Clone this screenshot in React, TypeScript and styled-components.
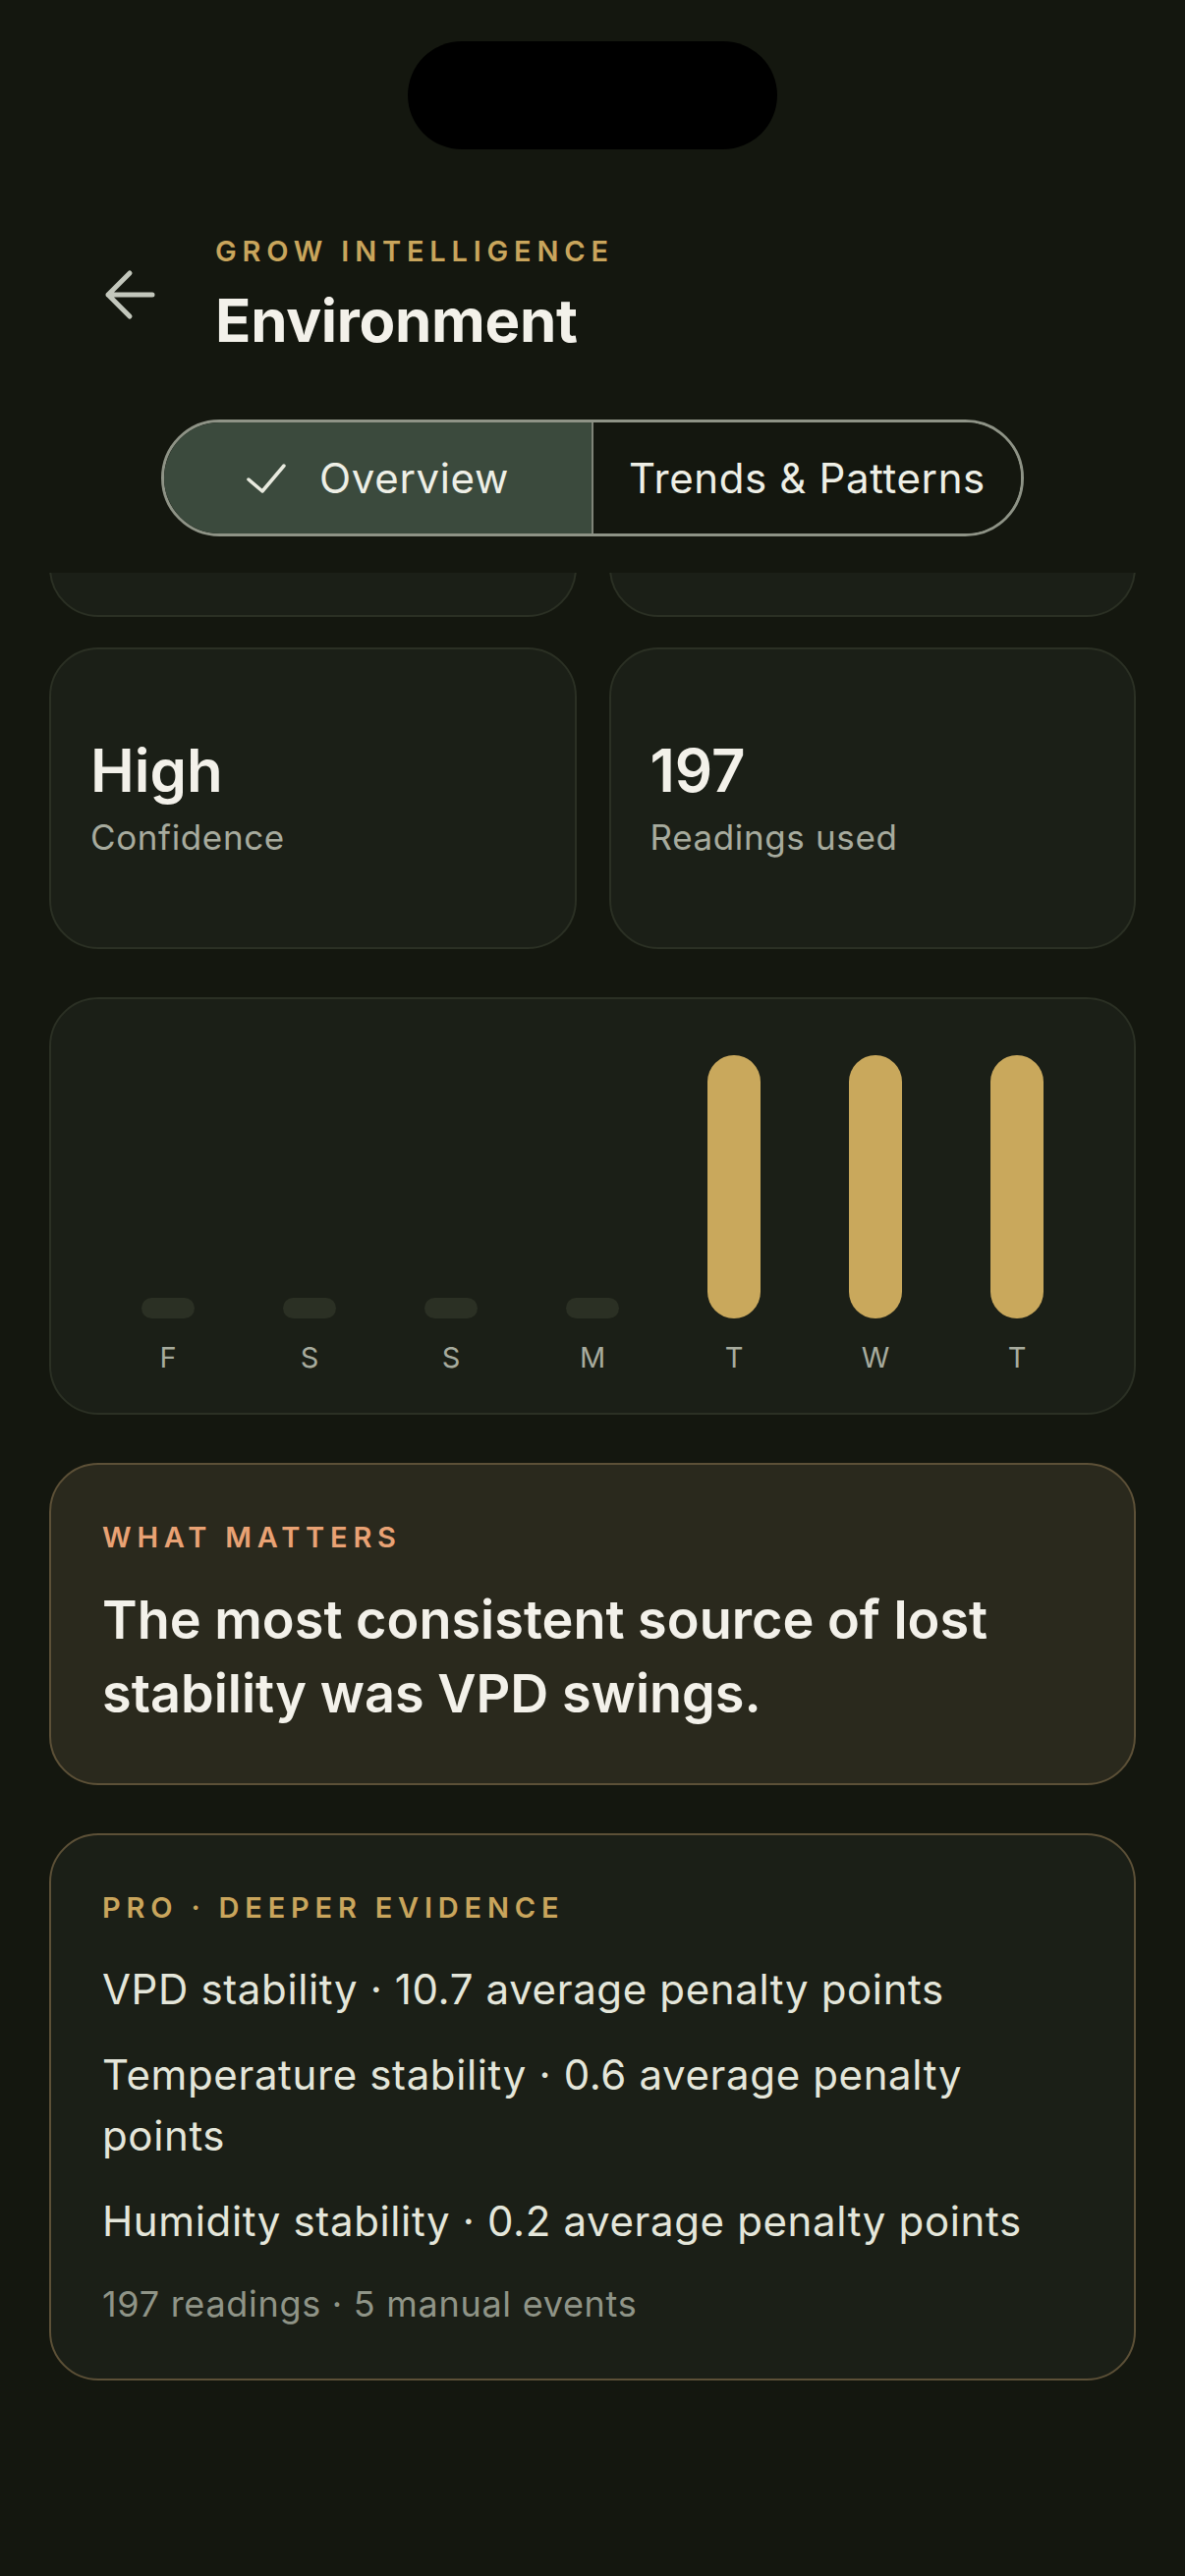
import React, { useLayoutEffect, useRef } from "react";
import styled, { createGlobalStyle } from "styled-components";

const GlobalStyle = createGlobalStyle`
  html, body {
    margin: 0;
    padding: 0;
    background: #14170f;
  }
  body {
    font-family: Inter, "Noto Sans", "Liberation Sans", sans-serif;
    -webkit-font-smoothing: antialiased;
  }
  * { box-sizing: border-box; }
`;

const Screen = styled.div`
  width: 100%;
  height: 100vh;
  display: flex;
  flex-direction: column;
  background: #14170f;
  overflow: hidden;
`;

const StatusArea = styled.div`
  padding-top: 42px;
  display: flex;
  justify-content: center;
`;

const Island = styled.div`
  width: 376px;
  height: 110px;
  border-radius: 55px;
  background: #000;
`;

const Header = styled.header`
  margin-top: 86px;
  display: flex;
  align-items: center;
  padding-left: 106px;
  gap: 61px;
`;

const BackButton = styled.button`
  width: 52px;
  height: 52px;
  padding: 0;
  border: 0;
  background: transparent;
  display: flex;
  align-items: center;
  justify-content: center;
  cursor: pointer;
`;

const TitleBlock = styled.div`
  display: flex;
  flex-direction: column;
`;

const Eyebrow = styled.div<{ $color?: string }>`
  font-size: 29px;
  line-height: 36px;
  font-weight: 600;
  letter-spacing: 0.2em;
  text-transform: uppercase;
  color: ${(p) => p.$color ?? "#c9a55c"};
`;

const Title = styled.h1`
  margin: 16px 0 0;
  font-size: 60px;
  line-height: 72px;
  font-weight: 700;
  color: #f3f1ea;
  letter-spacing: -0.005em;
`;

const Segmented = styled.div`
  margin: 65px auto 0;
  width: 878px;
  height: 119px;
  border: 3px solid #8e9386;
  border-radius: 60px;
  display: flex;
  overflow: hidden;
`;

const Segment = styled.button<{ $active?: boolean }>`
  flex: 1;
  border: 0;
  border-left: ${(p) => (p.$active ? "0" : "2px solid #7f8478")};
  background: ${(p) => (p.$active ? "#3b4a3d" : "#14170f")};
  color: #eeefe6;
  font-family: inherit;
  font-size: 42px;
  font-weight: 400;
  letter-spacing: 0.015em;
  display: flex;
  align-items: center;
  justify-content: center;
  gap: 34px;
  padding: 0;
  cursor: pointer;
`;

const ScrollArea = styled.div`
  margin-top: 37px;
  flex: 1;
  overflow: hidden;
`;

const Content = styled.div`
  padding: 0 50px 400px;
  display: flex;
  flex-direction: column;
  gap: 49px;
`;

const StatsGrid = styled.div`
  display: grid;
  grid-template-columns: 1fr 1fr;
  gap: 31px 33px;
`;

const Card = styled.section<{ $tone?: "plain" | "warm" | "pro" }>`
  border-radius: 50px;
  border: 2px solid
    ${(p) => (p.$tone === "warm" || p.$tone === "pro" ? "#5c5037" : "#2b3024")};
  background: ${(p) => (p.$tone === "warm" ? "#2a291d" : "#1b1f17")};
`;

const StatCard = styled(Card)`
  height: 307px;
  padding: 0 40px;
  display: flex;
  flex-direction: column;
  justify-content: center;
`;

const StatValue = styled.div`
  font-size: 60px;
  line-height: 66px;
  font-weight: 600;
  color: #f3f1ea;
`;

const StatCaption = styled.div`
  margin-top: 13px;
  font-size: 35px;
  line-height: 44px;
  letter-spacing: 0.018em;
  color: #a7ab9e;
`;

const ChartCard = styled(Card)`
  padding: 57px 47px 38px;
  display: grid;
  grid-template-columns: repeat(7, 1fr);
`;

const DayColumn = styled.div`
  display: flex;
  flex-direction: column;
  align-items: center;
`;

const BarTrack = styled.div`
  height: 268px;
  display: flex;
  align-items: flex-end;
`;

const Bar = styled.div<{ $on: boolean }>`
  width: 54px;
  border-radius: 27px;
  background: ${(p) => (p.$on ? "#c9a85c" : "#2b3024")};
`;

const DayLabel = styled.div`
  margin-top: 22px;
  font-size: 29px;
  line-height: 36px;
  color: #a7ab9e;
`;

const TextCard = styled(Card)`
  padding: 56px 52px 54px;
  display: flex;
  flex-direction: column;
`;

const Statement = styled.p`
  margin: 28px 0 0;
  font-size: 54px;
  line-height: 75px;
  font-weight: 600;
  color: #f3f1ea;
`;

const EvidenceList = styled.ul`
  list-style: none;
  margin: 34px 0 0;
  padding: 0;
  display: flex;
  flex-direction: column;
  gap: 25px;
`;

const EvidenceItem = styled.li`
  font-size: 42px;
  line-height: 62px;
  letter-spacing: 0.015em;
  color: #e4e6da;
`;

const Footnote = styled.div`
  margin-top: 31px;
  font-size: 36px;
  line-height: 44px;
  letter-spacing: 0.02em;
  color: #8f9487;
`;

const ArrowIcon = () => (
  <svg width="52" height="52" viewBox="0 0 52 52" fill="none">
    <path
      d="M49 26H4M26 4L4 26L26 48"
      stroke="#c3c7bc"
      strokeWidth="5"
      strokeLinecap="round"
      strokeLinejoin="round"
    />
  </svg>
);

const CheckIcon = () => (
  <svg width="40" height="30" viewBox="0 0 40 30" fill="none">
    <path
      d="M2 16L16 28L38 2"
      stroke="#e8eadf"
      strokeWidth="3.5"
      strokeLinecap="round"
      strokeLinejoin="round"
    />
  </svg>
);

const days = [
  { d: "F", v: 0 },
  { d: "S", v: 0 },
  { d: "S", v: 0 },
  { d: "M", v: 0 },
  { d: "T", v: 1 },
  { d: "W", v: 1 },
  { d: "T", v: 1 },
];

const evidence = [
  "VPD stability · 10.7 average penalty points",
  "Temperature stability · 0.6 average penalty points",
  "Humidity stability · 0.2 average penalty points",
];

export default function App() {
  const scrollRef = useRef<HTMLDivElement>(null);

  useLayoutEffect(() => {
    if (scrollRef.current) scrollRef.current.scrollTop = 262;
  }, []);

  return (
    <Screen>
      <GlobalStyle />
      <StatusArea>
        <Island />
      </StatusArea>
      <Header>
        <BackButton aria-label="Back">
          <ArrowIcon />
        </BackButton>
        <TitleBlock>
          <Eyebrow>Grow Intelligence</Eyebrow>
          <Title>Environment</Title>
        </TitleBlock>
      </Header>
      <Segmented>
        <Segment $active>
          <CheckIcon />
          Overview
        </Segment>
        <Segment>Trends &amp; Patterns</Segment>
      </Segmented>
      <ScrollArea ref={scrollRef}>
        <Content>
          <StatsGrid>
            <StatCard />
            <StatCard />
            <StatCard>
              <StatValue>High</StatValue>
              <StatCaption>Confidence</StatCaption>
            </StatCard>
            <StatCard>
              <StatValue>197</StatValue>
              <StatCaption>Readings used</StatCaption>
            </StatCard>
          </StatsGrid>
          <ChartCard>
            {days.map((item, i) => (
              <DayColumn key={i}>
                <BarTrack>
                  <Bar $on={item.v > 0} style={{ height: item.v > 0 ? 268 * item.v : 21 }} />
                </BarTrack>
                <DayLabel>{item.d}</DayLabel>
              </DayColumn>
            ))}
          </ChartCard>
          <TextCard $tone="warm">
            <Eyebrow $color="#e9a274">What matters</Eyebrow>
            <Statement>The most consistent source of lost stability was VPD swings.</Statement>
          </TextCard>
          <TextCard $tone="pro">
            <Eyebrow>Pro · Deeper evidence</Eyebrow>
            <EvidenceList>
              {evidence.map((e) => (
                <EvidenceItem key={e}>{e}</EvidenceItem>
              ))}
            </EvidenceList>
            <Footnote>197 readings · 5 manual events</Footnote>
          </TextCard>
        </Content>
      </ScrollArea>
    </Screen>
  );
}
